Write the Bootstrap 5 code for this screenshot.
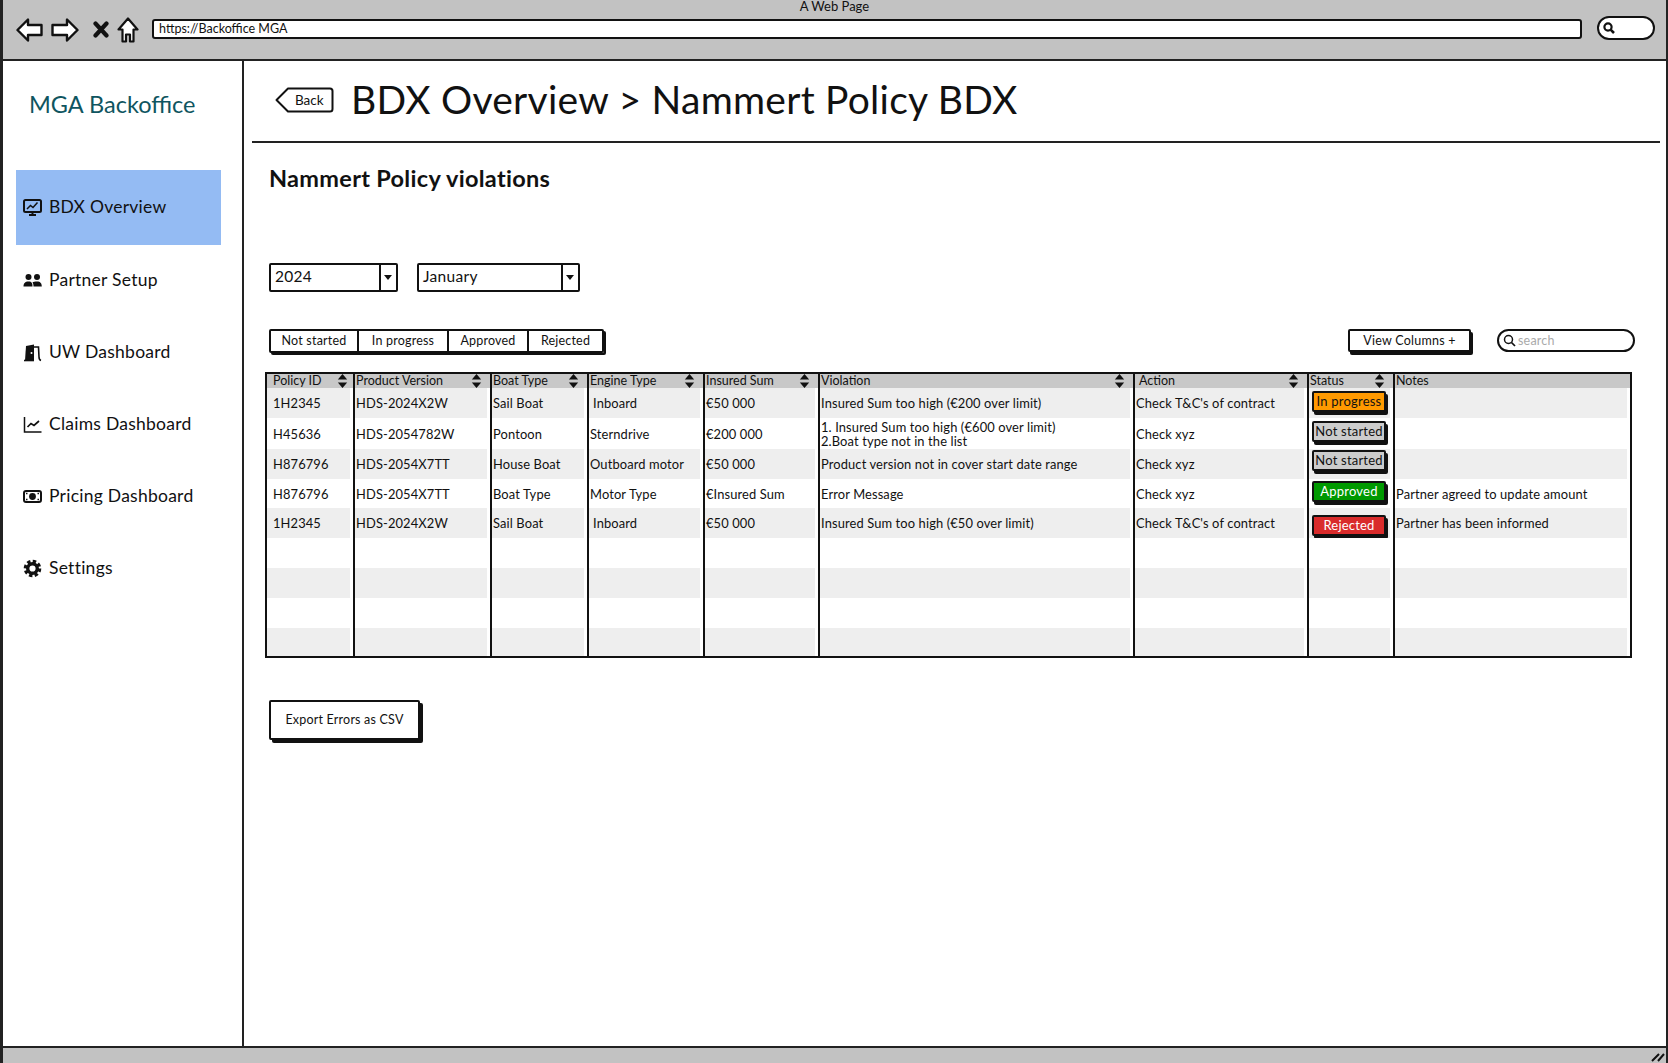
<!DOCTYPE html>
<html lang="en">
<head>
<meta charset="utf-8">
<title>BDX Overview</title>
<link href="https://cdn.jsdelivr.net/npm/bootstrap@5.3.0/dist/css/bootstrap.min.css" rel="stylesheet">
<style>
html,body{height:100%;overflow:hidden}
body{font-family:Lato,"Liberation Sans",sans-serif;color:#111;background:#fff}
.frame{height:1063px;border-left:3px solid #222;border-right:2px solid #222}
.topchrome{height:61px;background:#c2c2c2;border-bottom:2px solid #222;padding-left:13px;padding-right:11px;position:relative}
.pagetitle{position:absolute;left:0;right:0;top:0;text-align:center;font-size:13px;line-height:13px}
.urlbar{width:1430px;height:20px;margin-left:13px;margin-top:-1px;background:#fff;border:2px solid #111;border-radius:3px;font-size:12.5px;line-height:15px;padding-left:5px}
.chromesearch{width:58px;height:24px;margin-left:15px;margin-top:-4px;background:#fff;border:2px solid #111;border-radius:12px;padding-left:3px}
.midarea{height:985px}
.sidepanel{width:241px;border-right:2px solid #222}
.brandname{height:109px;padding-left:26px;padding-top:28px;font-size:23.5px;line-height:30px;color:#0f5560}
.sidenav .nav-link{height:72px;margin-left:13px;width:205px;padding:0 0 0 7px;gap:7px;color:#111;font-size:17.5px;letter-spacing:.25px}
.sidenav .nav-link.active{height:75px;margin-bottom:-1px;background:#94bbf3;color:#111}
.sideicon{width:19px;height:19px;flex:none}
.contentpane{min-width:0}
.headbar{height:82px;margin-left:8px;margin-right:6px;border-bottom:2px solid #222;padding-left:23px;gap:17px;padding-bottom:5px}
.backbtn{width:59px;height:26px;flex:none;position:relative;font-size:13.5px;line-height:26px;padding-left:20px;margin-top:2px}
.backshape{position:absolute;left:0;top:0}
.backtxt{position:relative}
.maintitle{font-size:39px;line-height:48px;font-weight:400;margin:0;letter-spacing:.25px}
.bodywrap{padding:21px 31px 0 25px}
.subhead{font-size:23.5px;line-height:28px;font-weight:700;margin:0 0 71px;letter-spacing:.3px}
.ddbox{height:29px;border:2px solid #111;border-radius:2px;font-size:15.5px;line-height:23px;padding-left:4px;position:relative;letter-spacing:.3px}
.dd1{width:129px}
.dd2{width:163px;margin-left:19px}
.ddcaret{position:absolute;right:0;top:0;bottom:0;width:17px;border-left:2px solid #111}
.ddcaret::after{content:"";position:absolute;left:3px;top:10px;border:4px solid transparent;border-top:5px solid #111;border-bottom:0}
.toolrow{margin-top:37px;height:24px}
.seggroup{width:335px;height:24px;border:2px solid #111;box-shadow:2px 2px 0 #111;border-radius:2px;font-size:12.5px}
.segitem{height:100%;text-align:center;line-height:19px;border-right:2px solid #111;letter-spacing:.2px}
.segitem:last-child{border-right:0}
.s1{width:88px}.s2{width:90px}.s3{width:80px}.s4{flex:1}
.viewbtn{width:123px;height:23px;padding:0;border:2px solid #111;border-radius:2px;box-shadow:2px 3px 0 #111;font-size:12.5px;line-height:18px;background:#fff;color:#111;letter-spacing:.25px}
.viewbtn:hover{background:#fff;color:#111}
.searchpill{width:138px;height:23px;margin-left:26px;border:2px solid #111;border-radius:12px;color:#aaa;font-size:12.5px;line-height:18px;padding-left:4px;gap:2px;letter-spacing:.2px}
.tablewrap{margin:19px 4px 0 -4px}
.viol{width:1367px;margin:0;table-layout:fixed;border-collapse:collapse;border:2px solid #111;font-size:12.9px;color:#111;letter-spacing:.12px}
.viol .c1{width:88px}.viol .c2{width:137px}.viol .c3{width:97px}.viol .c4{width:116px}.viol .c5{width:115px}.viol .c6{width:315px}.viol .c7{width:174px}.viol .c8{width:86px}
.table.viol>thead>tr>th{height:15px;padding:0 0 0 1px;background:#c8c8c8;font-weight:400;font-size:12.5px;letter-spacing:0;border:0;border-right:2px solid #111;line-height:14px;vertical-align:middle}
.table.viol>tbody>tr>td{padding:0 0 0 1px;border:0;border-right:2px solid #111;line-height:14px;vertical-align:middle;background:#fff;box-shadow:none;white-space:nowrap}
.table.viol>tbody>tr:nth-child(odd)>td{background:#eee;box-shadow:inset -3px 0 0 #fff}
.table.viol>thead>tr>th:last-child,.table.viol>tbody>tr>td:last-child{border-right:0}
.table.viol>thead>tr>th:first-child,.table.viol>tbody>tr>td:first-child{padding-left:6px}
.table.viol>tbody>tr>td.statcell{padding-left:3px}
.table.viol>thead>tr>th.indent,.table.viol>tbody>tr>td.indent{padding-left:4px}
.rh30{height:30px}.rh31{height:31px}.rh29{height:29px}
.sorticon{width:11px;height:14px;flex:none;margin-right:8px}
.first-sort{margin-right:5px}
.stat{display:block;width:74px;height:21px;padding:0;border:2px solid #111;border-radius:2px;box-shadow:2px 3px 0 #111;font-size:13px;line-height:16px;font-weight:400;text-align:center;letter-spacing:.2px}
.st-prog{background:#f90;color:#111}
.st-none{background:#ccc;color:#111}
.st-ok{background:#090;color:#fff}
.st-no{background:#d92b2b;color:#fff}
.stat.up2{margin-bottom:5px}
.stat.up3{margin-bottom:8px}
.stat.up1{margin-bottom:3px}
.stat.dn2{margin-top:4px}
.exportbtn{display:block;margin-top:42px;width:151px;height:40px;padding:0;border:2px solid #111;border-radius:2px;box-shadow:3px 3px 0 #111;font-size:12.5px;background:#fff;color:#111;letter-spacing:.2px}
.exportbtn:hover{background:#fff;color:#111}
.bottombar{height:17px;background:#c2c2c2;border-top:2px solid #222}
.gripicon{width:16px;height:14px}
.iconx{margin-left:14px}
</style>
</head>
<body>
<div class="frame d-flex flex-column">
  <header class="topchrome d-flex align-items-center">
    <div class="pagetitle">A Web Page</div>
    <svg width="27" height="24" viewBox="0 0 27 24"><path d="M1.5 12 12 1.5V7h13.5v10H12v5.5z" fill="#fff" stroke="#111" stroke-width="2.4" stroke-linejoin="round"/></svg>
    <svg width="28" height="24" viewBox="0 0 28 24" class="ms-2"><path d="M26.5 12 16 1.5V7H1.5v10H16v5.5z" fill="#fff" stroke="#111" stroke-width="2.4" stroke-linejoin="round"/></svg>
    <svg width="16" height="17" viewBox="0 0 16 17" class="iconx"><path d="M2.5 2.5 13.5 14.5M13.5 2.5 2.5 14.5" stroke="#111" stroke-width="4.2" stroke-linecap="round"/></svg>
    <svg width="22" height="26" viewBox="0 0 22 26" class="ms-2"><path d="M11 1.5 20.5 12.5H16.5V24.5H13V17.5H9V24.5H5.5V12.5H1.5z" fill="#fff" stroke="#111" stroke-width="2.2" stroke-linejoin="round"/></svg>
    <div class="urlbar">https://Backoffice MGA</div>
    <div class="chromesearch d-flex align-items-center">
      <svg width="14" height="14" viewBox="0 0 14 14"><circle cx="6" cy="6" r="3.6" fill="none" stroke="#111" stroke-width="2.2"/><path d="M8.6 8.6 12 12" stroke="#111" stroke-width="2.6"/></svg>
    </div>
  </header>

  <div class="midarea d-flex">
    <aside class="sidepanel flex-shrink-0">
      <div class="brandname">MGA Backoffice</div>
      <nav class="nav flex-column sidenav">
        <a class="nav-link active d-flex align-items-center" href="#">
          <svg class="sideicon" viewBox="0 0 19 19"><rect x="1" y="2" width="17" height="12" rx="1.5" fill="none" stroke="#111" stroke-width="2"/><path d="M4 11l3.5-3.5 2.5 2 4.5-5" fill="none" stroke="#111" stroke-width="1.5"/><path d="M6 17h7M9.5 14v3" stroke="#111" stroke-width="2"/></svg>
          <span>BDX Overview</span>
        </a>
        <a class="nav-link d-flex align-items-center" href="#">
          <svg class="sideicon" viewBox="0 0 19 19"><circle cx="5.5" cy="6" r="3" fill="#111"/><circle cx="14" cy="6" r="3" fill="#111"/><path d="M.5 15.5c0-3 1.500-5 5-5s4 2 4 5zM10.500 15.500c0-1.700-.4-3.200-1-4.200.9-.5 2.500-.8 4.500-.8 3.500 0 4.800 2 4.800 5z" fill="#111"/></svg>
          <span>Partner Setup</span>
        </a>
        <a class="nav-link d-flex align-items-center" href="#">
          <svg class="sideicon" viewBox="0 0 19 19"><path d="M2 17.500 3 3l8-1.500v16z" fill="#111"/><circle cx="8.500" cy="10" r="1" fill="#fff"/><path d="M11 4h4.500l.5 10c0 2 .6 3 2 3.500" fill="none" stroke="#111" stroke-width="1.600"/><path d="M1 17.500h10" stroke="#111" stroke-width="1.600"/></svg>
          <span>UW Dashboard</span>
        </a>
        <a class="nav-link d-flex align-items-center" href="#">
          <svg class="sideicon" viewBox="0 0 19 19"><path d="M1.500 2v15h17" fill="none" stroke="#111" stroke-width="1.500"/><path d="M4.500 12l3.500-3.500 3 2 5-4.500" fill="none" stroke="#111" stroke-width="1.700"/></svg>
          <span>Claims Dashboard</span>
        </a>
        <a class="nav-link d-flex align-items-center" href="#">
          <svg class="sideicon" viewBox="0 0 19 19"><rect x="1" y="4" width="17" height="11" rx="2" fill="none" stroke="#111" stroke-width="2"/><circle cx="9.500" cy="9.500" r="3.400" fill="#111"/><path d="M3 6.500h1.500M3 12.500h1.500M14.500 6.500H16M14.500 12.500H16" stroke="#111" stroke-width="1.500"/></svg>
          <span>Pricing Dashboard</span>
        </a>
        <a class="nav-link d-flex align-items-center" href="#">
          <svg class="sideicon" viewBox="0 0 19 19"><circle cx="9.500" cy="9.500" r="7" fill="none" stroke="#111" stroke-width="3.600" stroke-dasharray="3.300 2.200"/><circle cx="9.500" cy="9.500" r="4.800" fill="none" stroke="#111" stroke-width="3.400"/></svg>
          <span>Settings</span>
        </a>
      </nav>
    </aside>

    <main class="contentpane flex-grow-1">
      <div class="headbar d-flex align-items-center">
        <div class="backbtn">
          <svg class="backshape" width="59" height="26" viewBox="0 0 59 26"><path d="M13 1.500H55c1.500 0 2.500 1 2.500 2.500v18c0 1.500-1 2.500-2.500 2.500H13L1.500 13z" fill="#fff" stroke="#111" stroke-width="2" stroke-linejoin="round"/></svg>
          <span class="backtxt">Back</span>
        </div>
        <h1 class="maintitle">BDX Overview &gt; Nammert Policy BDX</h1>
      </div>

      <div class="bodywrap">
        <h2 class="subhead">Nammert Policy violations</h2>

        <div class="d-flex">
          <div class="ddbox dd1">2024<span class="ddcaret"></span></div>
          <div class="ddbox dd2">January<span class="ddcaret"></span></div>
        </div>

        <div class="toolrow d-flex align-items-start">
          <div class="seggroup d-flex">
            <div class="segitem s1">Not started</div>
            <div class="segitem s2">In progress</div>
            <div class="segitem s3">Approved</div>
            <div class="segitem s4">Rejected</div>
          </div>
          <button type="button" class="btn viewbtn ms-auto">View Columns +</button>
          <div class="searchpill d-flex align-items-center">
            <svg width="13" height="13" viewBox="0 0 13 13"><circle cx="5.500" cy="5.500" r="4" fill="none" stroke="#111" stroke-width="1.500"/><path d="M8.500 8.500 12 12" stroke="#111" stroke-width="1.700"/></svg>
            <span>search</span>
          </div>
        </div>

        <div class="tablewrap">
          <table class="table viol">
            <colgroup><col class="c1"><col class="c2"><col class="c3"><col class="c4"><col class="c5"><col class="c6"><col class="c7"><col class="c8"><col></colgroup>
            <thead>
              <tr>
                <th><div class="d-flex justify-content-between align-items-center">Policy ID<svg class="sorticon first-sort" viewBox="0 0 11 15"><path d="M5.500 0 10.500 6H.5zM5.500 15 .5 9h10z" fill="#111"/></svg></div></th>
                <th><div class="d-flex justify-content-between align-items-center">Product Version<svg class="sorticon" viewBox="0 0 11 15"><path d="M5.500 0 10.500 6H.5zM5.500 15 .5 9h10z" fill="#111"/></svg></div></th>
                <th><div class="d-flex justify-content-between align-items-center">Boat Type<svg class="sorticon" viewBox="0 0 11 15"><path d="M5.500 0 10.500 6H.5zM5.500 15 .5 9h10z" fill="#111"/></svg></div></th>
                <th><div class="d-flex justify-content-between align-items-center">Engine Type<svg class="sorticon" viewBox="0 0 11 15"><path d="M5.500 0 10.500 6H.5zM5.500 15 .5 9h10z" fill="#111"/></svg></div></th>
                <th><div class="d-flex justify-content-between align-items-center">Insured Sum<svg class="sorticon" viewBox="0 0 11 15"><path d="M5.500 0 10.500 6H.5zM5.500 15 .5 9h10z" fill="#111"/></svg></div></th>
                <th><div class="d-flex justify-content-between align-items-center">Violation<svg class="sorticon" viewBox="0 0 11 15"><path d="M5.500 0 10.500 6H.5zM5.500 15 .5 9h10z" fill="#111"/></svg></div></th>
                <th class="indent"><div class="d-flex justify-content-between align-items-center">Action<svg class="sorticon" viewBox="0 0 11 15"><path d="M5.500 0 10.500 6H.5zM5.500 15 .5 9h10z" fill="#111"/></svg></div></th>
                <th><div class="d-flex justify-content-between align-items-center">Status<svg class="sorticon" viewBox="0 0 11 15"><path d="M5.500 0 10.500 6H.5zM5.500 15 .5 9h10z" fill="#111"/></svg></div></th>
                <th>Notes</th>
              </tr>
            </thead>
            <tbody>
              <tr class="rh30"><td>1H2345</td><td>HDS-2024X2W</td><td>Sail Boat</td><td class="indent">Inboard</td><td>€50 000</td><td>Insured Sum too high (€200 over limit)</td><td>Check T&amp;C's of contract</td><td class="statcell"><span class="badge stat st-prog up1">In progress</span></td><td></td></tr>
              <tr class="rh31"><td>H45636</td><td>HDS-2054782W</td><td>Pontoon</td><td>Sterndrive</td><td>€200 000</td><td>1. Insured Sum too high (€600 over limit)<br>2.Boat type not in the list</td><td>Check xyz</td><td class="statcell"><span class="badge stat st-none up2">Not started</span></td><td></td></tr>
              <tr class="rh30"><td>H876796</td><td>HDS-2054X7TT</td><td>House Boat</td><td>Outboard motor</td><td>€50 000</td><td>Product version not in cover start date range</td><td>Check xyz</td><td class="statcell"><span class="badge stat st-none up3">Not started</span></td><td></td></tr>
              <tr class="rh29"><td>H876796</td><td>HDS-2054X7TT</td><td>Boat Type</td><td>Motor Type</td><td>€Insured Sum</td><td>Error Message</td><td>Check xyz</td><td class="statcell"><span class="badge stat st-ok up2">Approved</span></td><td>Partner agreed to update amount</td></tr>
              <tr class="rh30"><td>1H2345</td><td>HDS-2024X2W</td><td>Sail Boat</td><td class="indent">Inboard</td><td>€50 000</td><td>Insured Sum too high (€50 over limit)</td><td>Check T&amp;C's of contract</td><td class="statcell"><span class="badge stat st-no dn2">Rejected</span></td><td>Partner has been informed</td></tr>
              <tr class="rh30"><td></td><td></td><td></td><td></td><td></td><td></td><td></td><td></td><td></td></tr>
              <tr class="rh30"><td></td><td></td><td></td><td></td><td></td><td></td><td></td><td></td><td></td></tr>
              <tr class="rh30"><td></td><td></td><td></td><td></td><td></td><td></td><td></td><td></td><td></td></tr>
              <tr class="rh29"><td></td><td></td><td></td><td></td><td></td><td></td><td></td><td></td><td></td></tr>
            </tbody>
          </table>
        </div>

        <button type="button" class="btn exportbtn">Export Errors as CSV</button>
      </div>
    </main>
  </div>

  <footer class="bottombar d-flex justify-content-end">
    <svg class="gripicon" viewBox="0 0 16 14"><path d="M2 13 9 6M8 13l6-7" stroke="#111" stroke-width="2"/></svg>
  </footer>
</div>
<script src="https://cdn.jsdelivr.net/npm/bootstrap@5.3.0/dist/js/bootstrap.bundle.min.js"></script>
</body>
</html>
